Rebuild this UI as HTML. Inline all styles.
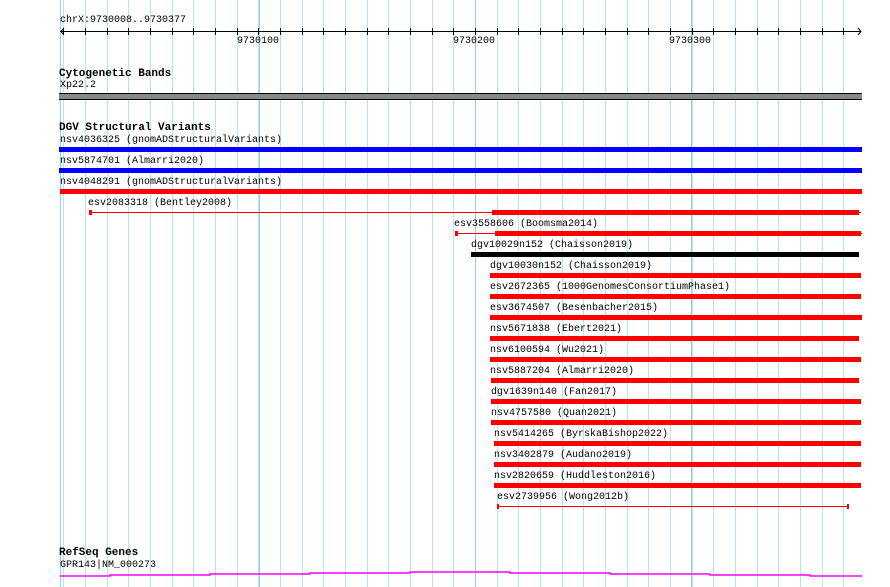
<!DOCTYPE html>
<html><head><style>
body{margin:0;width:890px;height:587px;background:#fff;position:relative;overflow:hidden;font-family:"Liberation Mono","DejaVu Sans Mono",monospace;font-size:10px;color:#000}
.t{position:absolute;white-space:nowrap;line-height:11px}
.b{font-weight:bold;font-size:11px}
.bar{position:absolute;height:5px;background:#f00}
.ln{position:absolute;height:1px;background:#f00}
.cap{position:absolute;width:3px;height:5px;background:#f00}
</style></head><body>
<svg width="890" height="587" style="position:absolute;left:0;top:0">
<g stroke="#aee9f0" stroke-width="1" id="g"></g>
<g stroke="#98cfe8"><line x1="60.5" y1="0" x2="60.5" y2="587"/><line x1="259.5" y1="0" x2="259.5" y2="587"/><line x1="475.5" y1="0" x2="475.5" y2="587"/><line x1="691.5" y1="0" x2="691.5" y2="587"/></g>
<line x1="60" y1="31.5" x2="861" y2="31.5" stroke="#000"/>
<polyline points="64,28 61,31.5 64,35" fill="none" stroke="#000"/>
<polyline points="858,28 861,31.5 858,35" fill="none" stroke="#000"/>
<g id="tk" stroke="#000"></g>
<polyline fill="none" stroke="#f0f" stroke-width="1.5" points="60,576 110,576 110,575 210,575 210,574 310,574 310,573 410,573 410,572 510,572 510,573 610,573 610,574 710,574 710,575 810,575 810,576 862,576"/>
</svg>
<script>
var g=document.getElementById('g'),tk=document.getElementById('tk'),s='',t='';
for(var k=-19;k<=18;k++){var x=Math.round(475+21.66*k)+.5;if(x<62||x>862)continue;s+='<line x1="'+x+'" y1="0" x2="'+x+'" y2="587"/>';t+='<line x1="'+x+'" y1="28" x2="'+x+'" y2="35"/>';}
g.innerHTML=s;tk.innerHTML=t;
</script>
<div class="t" style="left:60px;top:15px">chrX:9730008..9730377</div>
<div class="t" style="left:237px;top:36px">9730100</div>
<div class="t" style="left:453px;top:36px">9730200</div>
<div class="t" style="left:669px;top:36px">9730300</div>
<div class="t b" style="left:59px;top:69px">Cytogenetic Bands</div>
<div class="t" style="left:60px;top:80px">Xp22.2</div>
<div style="position:absolute;left:59px;top:93px;width:803px;height:5px;background:#888;border-top:1px solid #000;border-bottom:1px solid #000"></div>
<div class="t b" style="left:59px;top:123px">DGV Structural Variants</div>
<div class="t" style="left:60px;top:135px">nsv4036325 (gnomADStructuralVariants)</div>
<div class="bar" style="left:59px;top:147px;width:803px;background:#00f"></div>
<div class="t" style="left:60px;top:156px">nsv5874701 (Almarri2020)</div>
<div class="bar" style="left:59px;top:168px;width:803px;background:#00f"></div>
<div class="t" style="left:60px;top:177px">nsv4048291 (gnomADStructuralVariants)</div>
<div class="bar" style="left:60px;top:189px;width:802px"></div>
<div class="t" style="left:88px;top:198px">esv2083318 (Bentley2008)</div>
<div class="ln" style="left:89px;top:212px;width:772px"></div><div class="cap" style="left:89px;top:210px"></div>
<div class="bar" style="left:492px;top:210px;width:367px"></div>
<div class="t" style="left:454px;top:219px">esv3558606 (Boomsma2014)</div>
<div class="ln" style="left:455px;top:233px;width:407px"></div><div class="cap" style="left:455px;top:231px"></div>
<div class="bar" style="left:495px;top:231px;width:366px"></div>
<div class="t" style="left:471px;top:240px">dgv10029n152 (Chaisson2019)</div>
<div class="bar" style="left:471px;top:252px;width:388px;background:#000"></div>
<div class="t" style="left:490px;top:261px">dgv10030n152 (Chaisson2019)</div>
<div class="bar" style="left:490px;top:273px;width:371px"></div>
<div class="t" style="left:490px;top:282px">esv2672365 (1000GenomesConsortiumPhase1)</div>
<div class="bar" style="left:490px;top:294px;width:371px"></div>
<div class="t" style="left:490px;top:303px">esv3674507 (Besenbacher2015)</div>
<div class="bar" style="left:490px;top:315px;width:372px"></div>
<div class="t" style="left:490px;top:324px">nsv5671838 (Ebert2021)</div>
<div class="bar" style="left:490px;top:336px;width:369px"></div>
<div class="t" style="left:490px;top:345px">nsv6100594 (Wu2021)</div>
<div class="bar" style="left:490px;top:357px;width:371px"></div>
<div class="t" style="left:490px;top:366px">nsv5887204 (Almarri2020)</div>
<div class="bar" style="left:491px;top:378px;width:368px"></div>
<div class="t" style="left:491px;top:387px">dgv1639n140 (Fan2017)</div>
<div class="bar" style="left:491px;top:399px;width:370px"></div>
<div class="t" style="left:491px;top:408px">nsv4757580 (Quan2021)</div>
<div class="bar" style="left:491px;top:420px;width:370px"></div>
<div class="t" style="left:494px;top:429px">nsv5414265 (ByrskaBishop2022)</div>
<div class="bar" style="left:494px;top:441px;width:367px"></div>
<div class="t" style="left:494px;top:450px">nsv3402879 (Audano2019)</div>
<div class="bar" style="left:494px;top:462px;width:367px"></div>
<div class="t" style="left:494px;top:471px">nsv2820659 (Huddleston2016)</div>
<div class="bar" style="left:494px;top:483px;width:367px"></div>
<div class="t" style="left:497px;top:492px">esv2739956 (Wong2012b)</div>
<div class="ln" style="left:498px;top:506px;width:351px"></div><div class="cap" style="left:497px;top:504px;width:2px"></div><div class="cap" style="left:847px;top:504px;width:2px"></div>
<div class="t b" style="left:59px;top:548px">RefSeq Genes</div>
<div class="t" style="left:60px;top:560px">GPR143|NM_000273</div>
</body></html>
